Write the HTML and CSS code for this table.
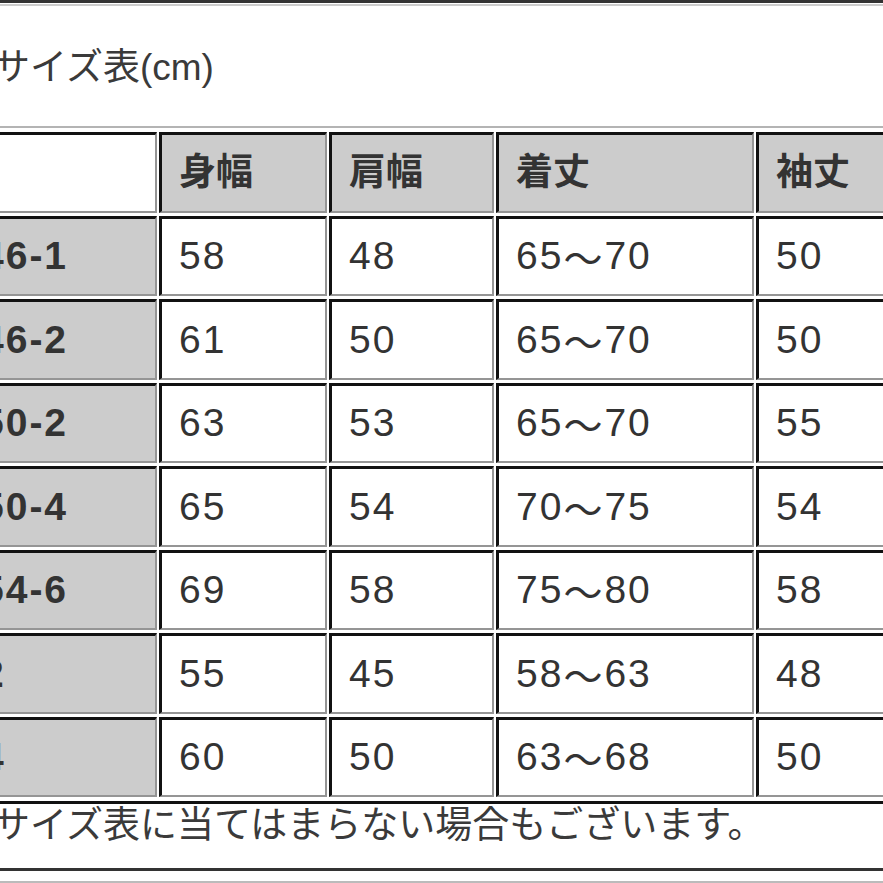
FILE: index.html
```html
<!DOCTYPE html>
<html lang="ja">
<head>
<meta charset="utf-8">
<title>サイズ表</title>
<link rel="stylesheet" href="styles.css">
</head>
<body>
<div class="prev"></div>
<section class="box">
  <h2 class="title">サイズ表(cm)</h2>
  <div class="size-table">
    <div class="cell corner"></div>
    <div class="cell head">身幅</div>
    <div class="cell head">肩幅</div>
    <div class="cell head">着丈</div>
    <div class="cell head">袖丈</div>

    <div class="cell label">46-1</div>
    <div class="cell">58</div><div class="cell">48</div><div class="cell">65<span class="wave">〜</span>70</div><div class="cell">50</div>

    <div class="cell label">46-2</div>
    <div class="cell">61</div><div class="cell">50</div><div class="cell">65<span class="wave">〜</span>70</div><div class="cell">50</div>

    <div class="cell label">50-2</div>
    <div class="cell">63</div><div class="cell">53</div><div class="cell">65<span class="wave">〜</span>70</div><div class="cell">55</div>

    <div class="cell label">50-4</div>
    <div class="cell">65</div><div class="cell">54</div><div class="cell">70<span class="wave">〜</span>75</div><div class="cell">54</div>

    <div class="cell label">54-6</div>
    <div class="cell">69</div><div class="cell">58</div><div class="cell">75<span class="wave">〜</span>80</div><div class="cell">58</div>

    <div class="cell label">2</div>
    <div class="cell">55</div><div class="cell">45</div><div class="cell">58<span class="wave">〜</span>63</div><div class="cell">48</div>

    <div class="cell label">4</div>
    <div class="cell">60</div><div class="cell">50</div><div class="cell">63<span class="wave">〜</span>68</div><div class="cell">50</div>
  </div>
  <p class="note">サイズ表に当てはまらない場合もございます。</p>
</section>
<div class="next"></div>
</body>
</html>
```
FILE: styles.css
```css
html, body {
  margin: 0;
  padding: 0;
  overflow: hidden;
  background: #ffffff;
}

body {
  font-family: "Liberation Sans", "Noto Sans CJK JP", sans-serif;
  color: #333333;
}

.prev {
  height: 0;
  border-bottom: 3px solid #333333;
}

.box {
  margin-top: 1px;
  margin-left: -40px;
  width: 1060px;
  border-top: 2px solid #cccccc;
  border-bottom: 3px solid #333333;
}

.title {
  margin: 0;
  padding: 40px 0 36px 33px;
  font-size: 37px;
  line-height: 44px;
  font-weight: normal;
  color: #3a3a3a;
}

.size-table {
  display: grid;
  grid-template-columns: 195px 168px 165px 258px 220px;
  grid-auto-rows: 80.5px;
  gap: 3px 2px;
  padding: 4px 2px;
  border-top: 2px solid #b4b4b4;
  border-bottom: 3px solid #111111;
}

.cell {
  box-sizing: border-box;
  display: flex;
  align-items: center;
  padding-left: 17px;
  border-style: solid;
  border-width: 3px 2px 2px 3px;
  border-color: #111111 #959595 #959595 #111111;
  background: #ffffff;
  font-size: 39px;
  line-height: 44px;
  letter-spacing: 2px;
  white-space: nowrap;
  overflow: hidden;
}

.wave {
  font-family: "Noto Sans CJK JP", sans-serif;
  line-height: 0;
  letter-spacing: 2px;
}

.head {
  background: #cccccc;
  font-weight: bold;
  font-size: 37px;
  letter-spacing: 0;
}

.label {
  background: #cccccc;
  font-weight: bold;
}

.note {
  margin: 0;
  padding: 0 0 20px 33px;
  font-size: 37px;
  line-height: 44px;
  color: #3a3a3a;
}

.next {
  margin-top: 10px;
  border-top: 2px solid #bbbbbb;
}
```
